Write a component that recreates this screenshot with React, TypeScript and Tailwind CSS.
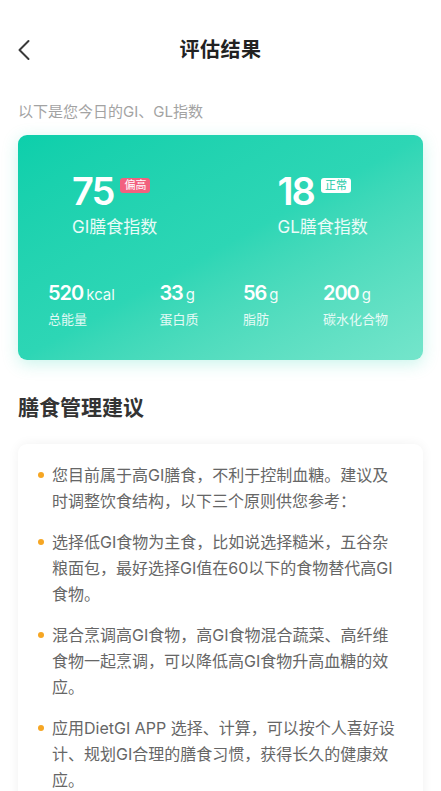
const stats = [
  { value: "520", unit: "kcal", label: "总能量" },
  { value: "33", unit: "g", label: "蛋白质" },
  { value: "56", unit: "g", label: "脂肪" },
  { value: "200", unit: "g", label: "碳水化合物" },
];

const tips = [
  "您目前属于高GI膳食，不利于控制血糖。建议及时调整饮食结构，以下三个原则供您参考：",
  "选择低GI食物为主食，比如说选择糙米，五谷杂粮面包，最好选择GI值在60以下的食物替代高GI食物。",
  "混合烹调高GI食物，高GI食物混合蔬菜、高纤维食物一起烹调，可以降低高GI食物升高血糖的效应。",
  "应用DietGI APP 选择、计算，可以按个人喜好设计、规划GI合理的膳食习惯，获得长久的健康效应。",
];

export default function App() {
  return (
    <div
      className="w-[441px] h-[791px] overflow-hidden bg-white"
      style={{ fontFamily: 'Inter, "Noto Sans CJK SC", sans-serif' }}
    >
      {/* Nav bar */}
      <header className="relative h-[100px] flex items-center justify-center">
        <button className="absolute left-[17px] top-[39px] text-[#333]">
          <svg width="14" height="22" viewBox="0 0 14 22" fill="none">
            <path d="M11.5 2 L2.5 11 L11.5 20" stroke="#3a3a3a" strokeWidth="2" strokeLinecap="round" strokeLinejoin="round" />
          </svg>
        </button>
        <h1 className="text-[20px] font-semibold text-[#222] tracking-[0.5px]">评估结果</h1>
      </header>

      <div className="px-[18px]">
        <p className="text-[15px] text-[#a3a3a3] leading-[22px] mt-[1px]">以下是您今日的GI、GL指数</p>

        {/* Index card */}
        <div className="mt-[12px] h-[225px] rounded-[9px] bg-gradient-to-br from-[#0ccfab] via-[#2dd6b5] to-[#74e5cb] shadow-[0_4px_16px_rgba(45,214,181,0.25)] text-white flex flex-col">
          <div className="grid grid-cols-2 pt-[37px]">
            <div className="pl-[54px]">
              <div className="flex items-start gap-[7px]">
                <span className="text-[38px] font-semibold leading-[38px] tracking-[-2px]">75</span>
                <span className="mt-[6px] px-[4px] h-[15px] leading-[15px] rounded-[3px] bg-[#f2617f] text-[11px] text-white">偏高</span>
              </div>
              <p className="mt-[5px] text-[17px] leading-[24px] text-white/90">GI膳食指数</p>
            </div>
            <div className="pl-[57px]">
              <div className="flex items-start gap-[7px]">
                <span className="text-[38px] font-semibold leading-[38px] tracking-[-2px]">18</span>
                <span className="mt-[6px] px-[4px] h-[15px] leading-[15px] rounded-[3px] bg-white text-[11px] text-[#19c9a6]">正常</span>
              </div>
              <p className="mt-[5px] text-[17px] leading-[24px] text-white/90">GL膳食指数</p>
            </div>
          </div>

          <div className="flex justify-between pl-[30px] pr-[35px] mt-[42px]">
            {stats.map((s) => (
              <div key={s.label} className="flex flex-col">
                <div className="flex items-baseline">
                  <span className="text-[20px] font-semibold leading-[24px] tracking-[-1px]">{s.value}</span>
                  <span className="ml-[3px] text-[15px] leading-[24px] text-white/95">{s.unit}</span>
                </div>
                <span className="mt-[3px] text-[13px] leading-[18px] text-white/85">{s.label}</span>
              </div>
            ))}
          </div>
        </div>

        <h2 className="mt-[34px] text-[21px] font-bold text-[#333] leading-[28px]">膳食管理建议</h2>

        {/* Advice card */}
        <div className="mt-[22px] rounded-[9px] bg-white shadow-[0_0_12px_rgba(0,0,0,0.06)] pl-[20px] pr-[19px] pt-[18px] pb-[20px] flex flex-col gap-[15px]">
          {tips.map((t, i) => (
            <div key={i} className="flex items-start gap-[8px]">
              <span className="mt-[10px] w-[6px] h-[6px] rounded-full bg-[#f6a623] shrink-0" />
              <p className="text-[16px] leading-[26px] text-[#666] w-[352px]">{t}</p>
            </div>
          ))}
        </div>
      </div>
    </div>
  );
}
